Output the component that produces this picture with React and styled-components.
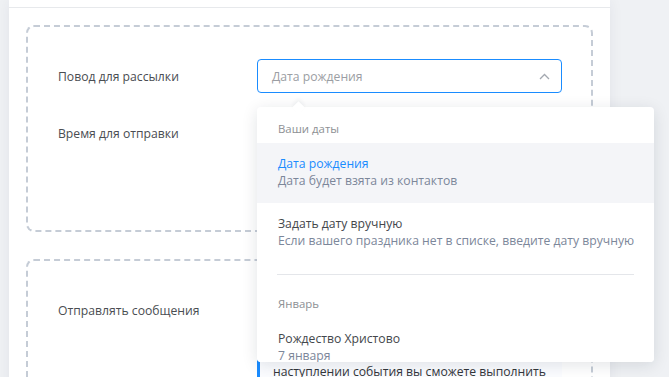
import React from 'react'
import styled, { createGlobalStyle } from 'styled-components'

const GlobalStyle = createGlobalStyle`
    html, body {
        margin: 0;
        padding: 0;
        background: #eff1f4;
        font-family: "Open Sans", "Noto Sans", sans-serif;
        overflow: hidden;
    }
`

const groups = [
    {
        title: 'Ваши даты',
        items: [
            { title: 'Дата рождения', sub: 'Дата будет взята из контактов', active: true },
            { title: 'Задать дату вручную', sub: 'Если вашего праздника нет в списке, введите дату вручную' },
        ],
    },
    {
        title: 'Январь',
        items: [
            { title: 'Рождество Христово', sub: '7 января' },
            { title: 'Старый Новый год', sub: '14 января' },
        ],
    },
]

const ChevronUp = () => (
    <svg width="11" height="7" viewBox="0 0 11 7" fill="none">
        <polyline points="1,6 5.5,1.5 10,6" stroke="#a3a8b0" strokeWidth="1.3" />
    </svg>
)

const App = () => {
    return (
        <>
            <GlobalStyle />
            <Page>
                <Card>
                    <CardHeader />
                    <CardBody>
                        <Section $bottom={80}>
                            <Row>
                                <Label>Повод для рассылки</Label>
                                <SelectWrap>
                                    <Select>
                                        <Placeholder>Дата рождения</Placeholder>
                                        <ChevronUp />
                                    </Select>
                                    <Dropdown>
                                        <List>
                                            {groups.map((g, gi) => (
                                                <div key={g.title}>
                                                    {gi > 0 && <Divider />}
                                                    <GroupTitle>{g.title}</GroupTitle>
                                                    {g.items.map(it => (
                                                        <Option key={it.title} $active={it.active}>
                                                            <OptionTitle $active={it.active}>{it.title}</OptionTitle>
                                                            <OptionSub>{it.sub}</OptionSub>
                                                        </Option>
                                                    ))}
                                                </div>
                                            ))}
                                        </List>
                                    </Dropdown>
                                </SelectWrap>
                            </Row>
                            <Row>
                                <Label>Время для отправки</Label>
                                <Select $plain>
                                    <Placeholder>10:00</Placeholder>
                                </Select>
                            </Row>
                        </Section>
                        <Section $bottom={40}>
                            <Row>
                                <Label>Отправлять сообщения</Label>
                                <Select $plain>
                                    <Placeholder>В день события</Placeholder>
                                </Select>
                            </Row>
                            <Row>
                                <span />
                                <Alert>
                                    Сообщение будет отправлено автоматически. При<br />
                                    наступлении события вы сможете выполнить<br />
                                    дополнительные действия.
                                </Alert>
                            </Row>
                        </Section>
                    </CardBody>
                </Card>
            </Page>
        </>
    )
}

export default App

const Page = styled.div`
    height: 377px;
    padding-left: 9px;
    box-sizing: border-box;
`

const Card = styled.div`
    width: 601px;
    min-height: 100%;
    background: #fff;
    box-shadow: 0 0 14px rgba(30, 40, 60, 0.06);
`

const CardHeader = styled.div`
    height: 7px;
    border-bottom: 1px solid #e7e9ec;
`

const CardBody = styled.div`
    padding: 17px 17px 0;
    display: flex;
    flex-direction: column;
    gap: 27px;
`

const Section = styled.div`
    border: 2px dashed #c5ccd6;
    border-radius: 8px;
    padding: 32px 30px ${p => p.$bottom}px;
    display: flex;
    flex-direction: column;
    gap: 23px;
`

const Row = styled.div`
    display: grid;
    grid-template-columns: 199px 305px;
    align-items: center;
`

const Label = styled.div`
    font-size: 12.2px;
    color: #4a4d52;
    white-space: nowrap;
`

const SelectWrap = styled.div`
    position: relative;
    z-index: 5;
`

const Select = styled.div`
    height: 34px;
    box-sizing: border-box;
    border: 1px solid ${p => (p.$plain ? '#fff' : '#1a8cff')};
    border-radius: 4px;
    padding: 0 11px 0 14px;
    display: flex;
    align-items: center;
    justify-content: space-between;
`

const Placeholder = styled.span`
    font-size: 12.2px;
    color: #9b9ea3;
`

const Dropdown = styled.div`
    position: absolute;
    top: calc(100% + 14px);
    left: 0;
    width: 397px;
    height: 255px;
    background: #fff;
    border-radius: 4px;
    box-shadow: 0 3px 16px rgba(20, 30, 50, 0.12);

    &::before {
        content: "";
        position: absolute;
        top: -4px;
        left: 37px;
        width: 9px;
        height: 9px;
        background: #fff;
        transform: rotate(45deg);
        box-shadow: -2px -2px 4px rgba(20, 30, 50, 0.05);
    }
`

const List = styled.div`
    position: relative;
    height: 100%;
    overflow: hidden;
    border-radius: 4px;
`

const Divider = styled.div`
    height: 1px;
    background: #e4e6ea;
    margin: 11px 20px 7px;
`

const GroupTitle = styled.div`
    font-size: 11.4px;
    line-height: 17px;
    color: #8d9094;
    padding: 13px 21px 6px;
`

const Option = styled.div`
    padding: 12px 21px 14px;
    background: ${p => (p.$active ? '#f4f5f8' : '#fff')};
    white-space: nowrap;
`

const OptionTitle = styled.div`
    font-size: 12.2px;
    line-height: 17px;
    color: ${p => (p.$active ? '#1a8cff' : '#44474c')};
`

const OptionSub = styled.div`
    font-size: 12.2px;
    line-height: 17px;
    color: #7c879a;
`

const Alert = styled.div`
    margin-top: -13px;
    padding: 8px 12px 8px 13px;
    border-left: 3px solid #1a8cff;
    background: #fbfcff;
    font-size: 12.2px;
    line-height: 18px;
    color: #33363b;
    white-space: nowrap;
`
